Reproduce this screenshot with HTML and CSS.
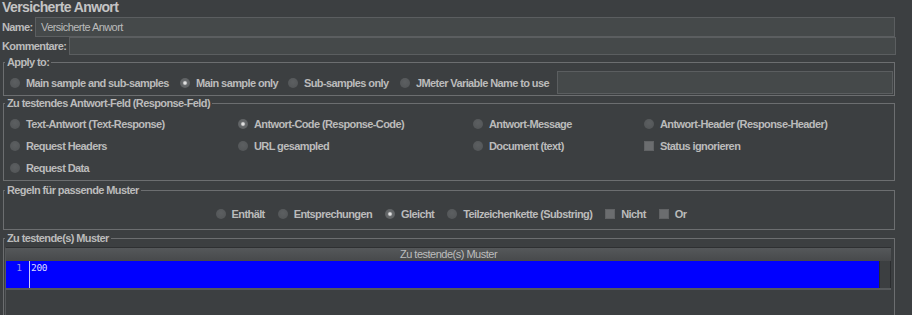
FILE: index.html
```html
<!DOCTYPE html>
<html>
<head>
<meta charset="utf-8">
<link rel="stylesheet" href="styles.css">
</head>
<body>
<div class="panel">
  <div class="title">Versicherte Anwort</div>
  <div class="field-row name-row">
    <span class="lbl">Name:</span>
    <div class="input">Versicherte Anwort</div>
  </div>
  <div class="field-row comment-row">
    <span class="lbl">Kommentare:</span>
    <div class="input"></div>
  </div>

  <fieldset class="box apply">
    <legend>Apply to:</legend>
    <div class="apply-row">
      <span class="opt"><i class="radio"></i>Main sample and sub-samples</span>
      <span class="opt"><i class="radio on"></i>Main sample only</span>
      <span class="opt"><i class="radio"></i>Sub-samples only</span>
      <span class="opt"><i class="radio"></i>JMeter Variable Name to use</span>
      <div class="input var"></div>
    </div>
  </fieldset>

  <fieldset class="box response">
    <legend>Zu testendes Antwort-Feld (Response-Feld)</legend>
    <div class="resp-grid">
      <span class="opt"><i class="radio"></i>Text-Antwort (Text-Response)</span>
      <span class="opt"><i class="radio on"></i>Antwort-Code (Response-Code)</span>
      <span class="opt"><i class="radio"></i>Antwort-Message</span>
      <span class="opt"><i class="radio"></i>Antwort-Header (Response-Header)</span>
      <span class="opt"><i class="radio"></i>Request Headers</span>
      <span class="opt"><i class="radio"></i>URL gesampled</span>
      <span class="opt"><i class="radio"></i>Document (text)</span>
      <span class="opt"><i class="check"></i>Status ignorieren</span>
      <span class="opt"><i class="radio"></i>Request Data</span>
    </div>
  </fieldset>

  <fieldset class="box rules">
    <legend>Regeln für passende Muster</legend>
    <div class="rules-row">
      <span class="opt"><i class="radio"></i>Enthält</span>
      <span class="opt"><i class="radio"></i>Entsprechungen</span>
      <span class="opt"><i class="radio on"></i>Gleicht</span>
      <span class="opt"><i class="radio"></i>Teilzeichenkette (Substring)</span>
      <span class="opt"><i class="check"></i>Nicht</span>
      <span class="opt"><i class="check"></i>Or</span>
    </div>
  </fieldset>

  <fieldset class="box muster">
    <legend>Zu testende(s) Muster</legend>
    <div class="pane">
      <div class="thead">Zu testende(s) Muster</div>
      <div class="tbody">
        <div class="cell">
          <span class="gutter">1</span>
          <span class="code">200</span>
        </div>
        <div class="vscroll"></div>
      </div>
    </div>
  </fieldset>
</div>
</body>
</html>
```

FILE: styles.css
```css
* { box-sizing: border-box; }
html, body {
  margin: 0;
  background: #3c3f41;
}
body {
  width: 912px;
  height: 315px;
  overflow: hidden;
  font-family: "Liberation Sans", Arial, sans-serif;
  font-size: 11px;
  letter-spacing: -0.6px;
  font-weight: bold;
  color: #bbbbbb;
}
.panel { width: 896px; }

.title {
  font-size: 14px;
  line-height: 14px;
  margin: 0 0 3px 2px;
  color: #c4c4c4;
}

.field-row { display: flex; align-items: center; }
.name-row { height: 20px; }
.comment-row { height: 18px; }
.lbl { padding-left: 2px; width: 35px; flex: none; white-space: nowrap; }
.comment-row .lbl { width: auto; padding-right: 3px; }
.input {
  flex: 1;
  height: 100%;
  background: #45494a;
  border: 1px solid #5b5e60;
  font-weight: normal;
  font-size: 11px;
  line-height: 18px;
  padding-left: 5px;
  letter-spacing: -0.55px;
}
.name-row .input { margin-right: 1px; }

.box {
  margin: 0 1px 0 3px;
  padding: 0;
  border: 1px solid #6c6e70;
  min-width: 0;
}
.box legend {
  margin-left: 1px;
  padding: 0 2px;
  line-height: 12px;
}

.opt {
  display: inline-flex;
  align-items: center;
  white-space: nowrap;
}
.radio {
  width: 10px;
  height: 10px;
  border-radius: 50%;
  margin-right: 6px;
  flex: none;
  background: radial-gradient(circle at 50% 40%, #5c5f61, #515456);
}
.radio.on {
  background: radial-gradient(circle, #e0e0e0 0 1.3px, #9a9c9e 1.8px, #65686a 2.6px, #5e6163 5px);
}
.check {
  width: 10px;
  height: 10px;
  margin-right: 6px;
  flex: none;
  background: #6b6d6f;
  border: 1px solid #616365;
}

.apply { margin-top: 1px; }
.apply-row {
  display: grid;
  grid-template-columns: 170px 108px 112px 157px 1fr;
  align-items: center;
  padding: 3px 1px 1px 6px;
}
.input.var { height: 23px; margin-right: 0; }

.response { margin-top: 1px; }
.resp-grid {
  display: grid;
  grid-template-columns: 228px 235px 171px 1fr;
  grid-auto-rows: 22px;
  align-items: center;
  padding: 4px 0 1px 6px;
}

.rules { margin-top: 3px; }
.rules-row {
  display: flex;
  justify-content: center;
  align-items: center;
  gap: 13px;
  height: 20px;
  padding-left: 4px;
  margin: 8px 0 5px;
}

.muster { margin-top: 2px; height: 90px; }
.pane {
  margin: 3px 3px 0 1px;
  border-top: 1px solid #2e3032;
  border-left: 1px solid #55585a;
  height: 80px;
}
.thead {
  height: 13px;
  line-height: 13px;
  text-align: center;
  font-weight: normal;
  font-size: 11px;
  letter-spacing: -0.5px;
  background: linear-gradient(#55585a, #47494b);
  color: #bdbdbd;
}
.tbody {
  display: flex;
  height: 29px;
  border-bottom: 2px solid #56595b;
}
.cell {
  flex: 1;
  background: #0000ff;
  display: flex;
  align-items: flex-start;
}
.gutter {
  width: 24px;
  text-align: center;
  padding-left: 3px;
  border-right: 1px solid #c8c8ff;
  height: 100%;
  font-family: "DejaVu Sans Mono", monospace;
  font-weight: normal;
  font-size: 9.5px;
  letter-spacing: 0;
  line-height: 13px;
  color: #9a9adf;
}
.code {
  padding-left: 1px;
  font-family: "DejaVu Sans Mono", monospace;
  font-weight: normal;
  font-size: 9.5px;
  letter-spacing: -0.3px;
  line-height: 13px;
  color: #dcdcff;
}
.vscroll {
  width: 12px;
  flex: none;
  background: #3c3f41;
  border-left: 1px solid #2b2d2f;
  border-right: 1px solid #2b2d2f;
}
```
